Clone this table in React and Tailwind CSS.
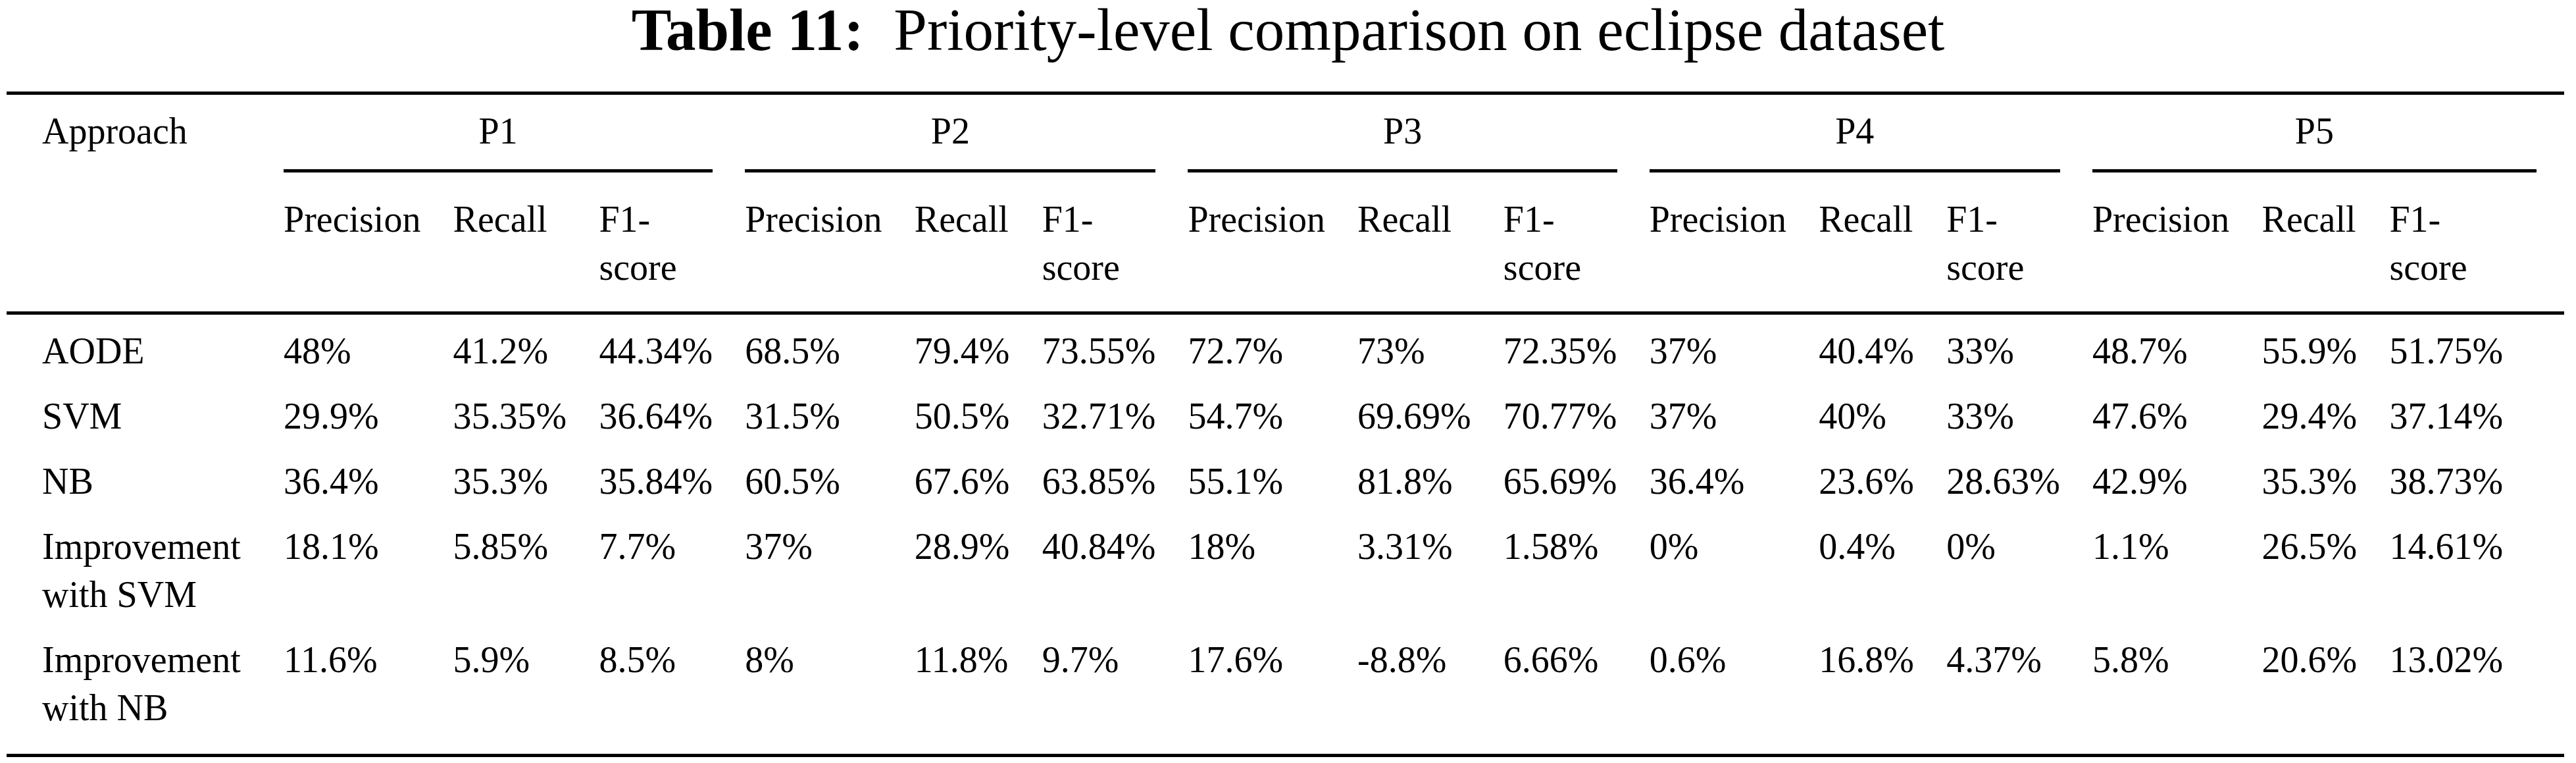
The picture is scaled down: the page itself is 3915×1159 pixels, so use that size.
import React from "react";

const groups = [
  { label: "P1", mr: "mr-[49px]" },
  { label: "P2", mr: "mr-[49px]" },
  { label: "P3", mr: "mr-[49px]" },
  { label: "P4", mr: "mr-[49px]" },
  { label: "P5", mr: "mr-[42px]" },
];

const rows = [
  { name: ["AODE"], vals: ["48%", "41.2%", "44.34%", "68.5%", "79.4%", "73.55%", "72.7%", "73%", "72.35%", "37%", "40.4%", "33%", "48.7%", "55.9%", "51.75%"] },
  { name: ["SVM"], vals: ["29.9%", "35.35%", "36.64%", "31.5%", "50.5%", "32.71%", "54.7%", "69.69%", "70.77%", "37%", "40%", "33%", "47.6%", "29.4%", "37.14%"] },
  { name: ["NB"], vals: ["36.4%", "35.3%", "35.84%", "60.5%", "67.6%", "63.85%", "55.1%", "81.8%", "65.69%", "36.4%", "23.6%", "28.63%", "42.9%", "35.3%", "38.73%"] },
  { name: ["Improvement", "with SVM"], vals: ["18.1%", "5.85%", "7.7%", "37%", "28.9%", "40.84%", "18%", "3.31%", "1.58%", "0%", "0.4%", "0%", "1.1%", "26.5%", "14.61%"] },
  { name: ["Improvement", "with NB"], vals: ["11.6%", "5.9%", "8.5%", "8%", "11.8%", "9.7%", "17.6%", "-8.8%", "6.66%", "0.6%", "16.8%", "4.37%", "5.8%", "20.6%", "13.02%"] },
];

const cols =
  "grid grid-cols-[421px_257.6px_221.8px_221.8px_257.6px_193.9px_221.8px_257.6px_221.8px_221.8px_257.6px_193.9px_221.8px_257.6px_193.9px_265.5px]";

export default function App() {
  return (
    <div className="w-[3915px] h-[1159px] bg-white text-black font-['Liberation_Serif','Times_New_Roman',serif]">
      <div className="h-[139px] text-center text-[91px] leading-[91px] whitespace-nowrap">
        <span className="font-bold">Table 11:</span>
        <span>{"\u00a0\u00a0"}Priority-level comparison on eclipse dataset</span>
      </div>
      <div className="ml-[10px] w-[3887px] border-t-[5px] border-b-[5px] border-black text-[56px] leading-[73px]">
        {/* header */}
        <div className={`${cols} border-b-[5px] border-black`}>
          <div className="row-span-2 pl-[54px] pt-[19px]">Approach</div>
          {groups.map((g) => (
            <div key={g.label} className="col-span-3 pt-[19px]">
              <div className={`${g.mr} flex flex-col`}>
                <div className="text-center">{g.label}</div>
                <div className="mt-[21px] h-[5px] bg-black" />
              </div>
            </div>
          ))}
          {groups.map((g) => (
            <React.Fragment key={"s" + g.label}>
              <div className="pt-[35px] pb-[30px]">Precision</div>
              <div className="pt-[35px] pb-[30px]">Recall</div>
              <div className="pt-[35px] pb-[30px]">
                F1-
                <br />
                score
              </div>
            </React.Fragment>
          ))}
        </div>
        {/* body */}
        <div className={`${cols} pt-[6px] pb-[20px]`}>
          {rows.map((r, i) => (
            <React.Fragment key={i}>
              <div className="pl-[54px] py-[13px] whitespace-nowrap">
                {r.name.map((n, k) => (
                  <div key={k}>{n}</div>
                ))}
              </div>
              {r.vals.map((v, j) => (
                <div key={j} className="py-[13px] whitespace-nowrap">
                  {v}
                </div>
              ))}
            </React.Fragment>
          ))}
        </div>
      </div>
    </div>
  );
}
